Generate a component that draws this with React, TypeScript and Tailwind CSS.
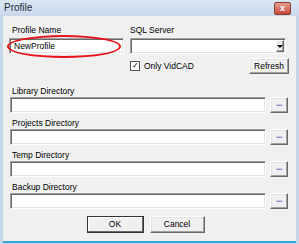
import React from 'react'

const sunken =
  'border border-t-[#a0a0a0] border-l-[#a0a0a0] border-b-white border-r-white bg-white shadow-[inset_1px_1px_0_#696969,inset_-1px_-1px_0_#e3e3e3]'
const raised =
  'border border-t-white border-l-white border-b-[#696969] border-r-[#696969] bg-[#f0f0f0] shadow-[inset_-1px_-1px_0_#a0a0a0,inset_1px_1px_0_#e3e3e3]'

const DirRow = ({ label }: { label: string }) => (
  <div className="flex flex-col">
    <div className="ml-[9px] h-[11px] leading-[11px]">{label}</div>
    <div className="flex items-center">
      <div className={`ml-[7px] h-[16px] w-[256px] ${sunken}`} />
      <button className={`ml-[4px] flex h-[16px] w-[18px] items-center justify-center ${raised}`}>
        <span className="-mt-[3px] text-[9px] font-bold leading-none tracking-[-0.5px] text-[#5a5ab4]">...</span>
      </button>
    </div>
  </div>
)

const App = () => {
  return (
    <div
      className="flex h-[244px] w-[299px] flex-col overflow-hidden bg-[#c6d7ea] text-[8.5px] leading-none text-black"
      style={{ fontFamily: '"Liberation Sans", Arial, sans-serif' }}
    >
      {/* title bar */}
      <div className="flex h-[16px] shrink-0 items-center justify-between bg-gradient-to-b from-[#dbe6f3] to-[#c9d8ea] pl-[4px] pr-[8px]">
        <span className="text-[10px] leading-[10px] text-[#1e2b3c]">Profile</span>
        <div className="flex h-[13px] w-[17px] items-center justify-center rounded-[2px] border border-[#8e3a2f] bg-gradient-to-b from-[#e3a191] to-[#c4473a]">
          <span className="text-[9px] font-bold leading-none text-white">x</span>
        </div>
      </div>

      {/* body */}
      <div className="mx-[3px] mb-[1px] flex min-h-0 flex-1 flex-col border-b-2 border-b-[#3aa2d2] bg-[#f0f0f0]">
        <div className="relative mt-[9px] flex shrink-0">
          <div className="flex w-[124px] flex-col">
            <div className="ml-[9px] h-[11px] leading-[11px]">Profile Name</div>
            <div className={`ml-[6px] mt-[2px] flex h-[16px] w-[115px] items-center pl-[4px] ${sunken}`}>
              NewProfile
            </div>
            <div className="absolute left-[4px] top-[10px] h-[23px] w-[114px] rounded-[50%] border-2 border-[#e8141c]" />
          </div>
          <div className="ml-[3px] flex flex-col">
            <div className="h-[11px] leading-[11px]">SQL Server</div>
            <div className={`mt-[2px] flex h-[16px] w-[156px] items-center justify-end ${sunken}`}>
              <div className={`mr-[1px] flex h-[12px] w-[8px] items-center justify-center ${raised}`}>
                <div className="h-0 w-0 border-x-[3px] border-t-[3px] border-x-transparent border-t-black" />
              </div>
            </div>
            <div className="mt-[4px] flex items-center">
              <div className="flex h-[10px] w-[10px] items-center justify-center border border-[#555] bg-white text-[8px] leading-none">
                ✓
              </div>
              <span className="ml-[4px]">Only VidCAD</span>
              <button className={`ml-auto mr-[-3px] h-[16px] w-[40px] leading-none ${raised}`}>Refresh</button>
            </div>
          </div>
        </div>

        <div className="mt-[12px] flex shrink-0 flex-col gap-[5px]">
          <DirRow label="Library Directory" />
          <DirRow label="Projects Directory" />
          <DirRow label="Temp Directory" />
          <DirRow label="Backup Directory" />
        </div>

        <div className="mt-[7px] flex shrink-0 justify-center gap-[6px] pr-[8px]">
          <button className="h-[17px] w-[57px] border border-[#333] bg-[#f0f0f0] leading-none shadow-[inset_-1px_-1px_0_#696969,inset_1px_1px_0_#fff]">
            OK
          </button>
          <button className={`h-[17px] w-[55px] leading-none ${raised}`}>Cancel</button>
        </div>
      </div>
    </div>
  )
}

export default App
